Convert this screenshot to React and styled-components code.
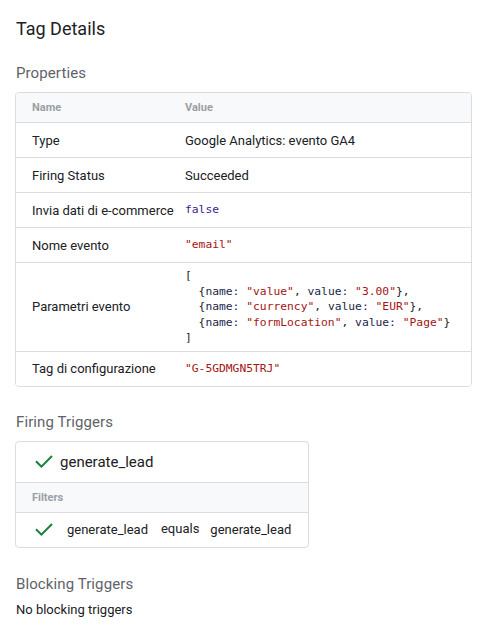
import React from "react";
import styled, { createGlobalStyle } from "styled-components";

const Global = createGlobalStyle`
  html, body { margin: 0; padding: 0; background: #fff; }
  body { font-family: Roboto, "Noto Sans", Arial, sans-serif; color: #202124; }
`;

const Page = styled.div`
  padding: 16px 32px 16px 15px;
  display: flex;
  flex-direction: column;
`;

const Title = styled.h1`
  margin: 0 0 0 1px;
  font-size: 18px;
  line-height: 26px;
  font-weight: 400;
  color: #202124;
`;

const Section = styled.section`
  display: flex;
  flex-direction: column;
  gap: 9px;
  margin-top: ${(p) => p.$top}px;
`;

const SectionTitle = styled.h2`
  margin: 0 0 0 1px;
  font-size: 15px;
  line-height: 20px;
  font-weight: 400;
  color: #5f6368;
  letter-spacing: 0.1px;
`;

const Card = styled.div`
  border: 1px solid #dadce0;
  border-radius: 4px;
  overflow: hidden;
  width: ${(p) => (p.$fit ? "fit-content" : "auto")};
`;

const Row = styled.div`
  display: grid;
  grid-template-columns: 153px 1fr;
  align-items: center;
  padding: 0 16px;
  min-height: ${(p) => (p.$head ? 29 : 34)}px;
  background: ${(p) => (p.$head ? "#f8f9fa" : "#fff")};
  border-top: ${(p) => (p.$first ? "none" : "1px solid #dadce0")};
  font-size: 13px;
`;

const HeadCell = styled.div`
  font-size: 11px;
  font-weight: 700;
  color: #9aa0a6;
`;

const Cell = styled.div`
  font-size: 13px;
  color: #202124;
`;

const Code = styled.pre`
  margin: 0;
  padding: ${(p) => (p.$block ? "5px 0 5px" : "0")};
  font-family: "DejaVu Sans Mono", "Liberation Mono", monospace;
  font-size: 11.3px;
  line-height: 15.5px;
  color: #202124;
  white-space: pre;
`;

const Str = styled.span`
  color: #a31515;
`;
const Kw = styled.span`
  color: #3a1d8f;
`;
const Key = styled.span`
  color: #1a1f4a;
`;

const TriggerHead = styled.div`
  display: flex;
  align-items: center;
  gap: 7px;
  height: 40px;
  padding: 0 20px 0 19px;
  font-size: 15px;
  color: #202124;
`;

const FiltersHead = styled.div`
  height: 29px;
  display: flex;
  align-items: center;
  padding: 0 16px;
  background: #f8f9fa;
  border-top: 1px solid #dadce0;
  border-bottom: 1px solid #dadce0;
  font-size: 11px;
  font-weight: 700;
  color: #9aa0a6;
`;

const FilterRow = styled.div`
  display: flex;
  align-items: center;
  height: 34px;
  padding: 0 17px 0 19px;
  font-size: 13px;
  color: #202124;
`;

const FilterText = styled.span`
  margin-left: ${(p) => p.$gap}px;
  position: relative;
  top: ${(p) => (p.$raise ? -1 : 0)}px;
`;

const Plain = styled.div`
  margin-left: 1px;
  font-size: 13px;
  line-height: 20px;
  color: #202124;
  margin-top: -3px;
`;

const Check = () => (
  <svg width="18" height="13" viewBox="0 0 18 13" fill="none">
    <path
      d="M1 6.2 L6.4 11.6 L17 1"
      stroke="#188038"
      strokeWidth="2"
      strokeLinecap="butt"
      strokeLinejoin="miter"
    />
  </svg>
);

const params = [
  ["value", "3.00", ","],
  ["currency", "EUR", ","],
  ["formLocation", "Page", ""],
];

export default function App() {
  return (
    <>
      <Global />
      <Page>
        <Title>Tag Details</Title>

        <Section $top={21}>
          <SectionTitle>Properties</SectionTitle>
          <Card>
            <Row $head $first>
              <HeadCell>Name</HeadCell>
              <HeadCell>Value</HeadCell>
            </Row>
            <Row>
              <Cell>Type</Cell>
              <Cell>Google Analytics: evento GA4</Cell>
            </Row>
            <Row>
              <Cell>Firing Status</Cell>
              <Cell>Succeeded</Cell>
            </Row>
            <Row>
              <Cell>Invia dati di e-commerce</Cell>
              <Code>
                <Kw>false</Kw>
              </Code>
            </Row>
            <Row>
              <Cell>Nome evento</Cell>
              <Code>
                <Str>"email"</Str>
              </Code>
            </Row>
            <Row>
              <Cell>Parametri evento</Cell>
              <Code $block>
                {"[\n"}
                {params.map(([n, v, c]) => (
                  <React.Fragment key={n}>
                    {"  {"}
                    <Key>name:</Key> <Str>"{n}"</Str>, <Key>value:</Key>{" "}
                    <Str>"{v}"</Str>
                    {"}" + c + "\n"}
                  </React.Fragment>
                ))}
                {"]"}
              </Code>
            </Row>
            <Row>
              <Cell>Tag di configurazione</Cell>
              <Code>
                <Str>"G-5GDMGN5TRJ"</Str>
              </Code>
            </Row>
          </Card>
        </Section>

        <Section $top={25}>
          <SectionTitle>Firing Triggers</SectionTitle>
          <Card $fit>
            <TriggerHead>
              <Check />
              <span>generate_lead</span>
            </TriggerHead>
            <FiltersHead>Filters</FiltersHead>
            <FilterRow>
              <Check />
              <FilterText $gap={14}>generate_lead</FilterText>
              <FilterText $gap={13} $raise>
                equals
              </FilterText>
              <FilterText $gap={11}>generate_lead</FilterText>
            </FilterRow>
          </Card>
        </Section>

        <Section $top={26}>
          <SectionTitle>Blocking Triggers</SectionTitle>
          <Plain>No blocking triggers</Plain>
        </Section>
      </Page>
    </>
  );
}
